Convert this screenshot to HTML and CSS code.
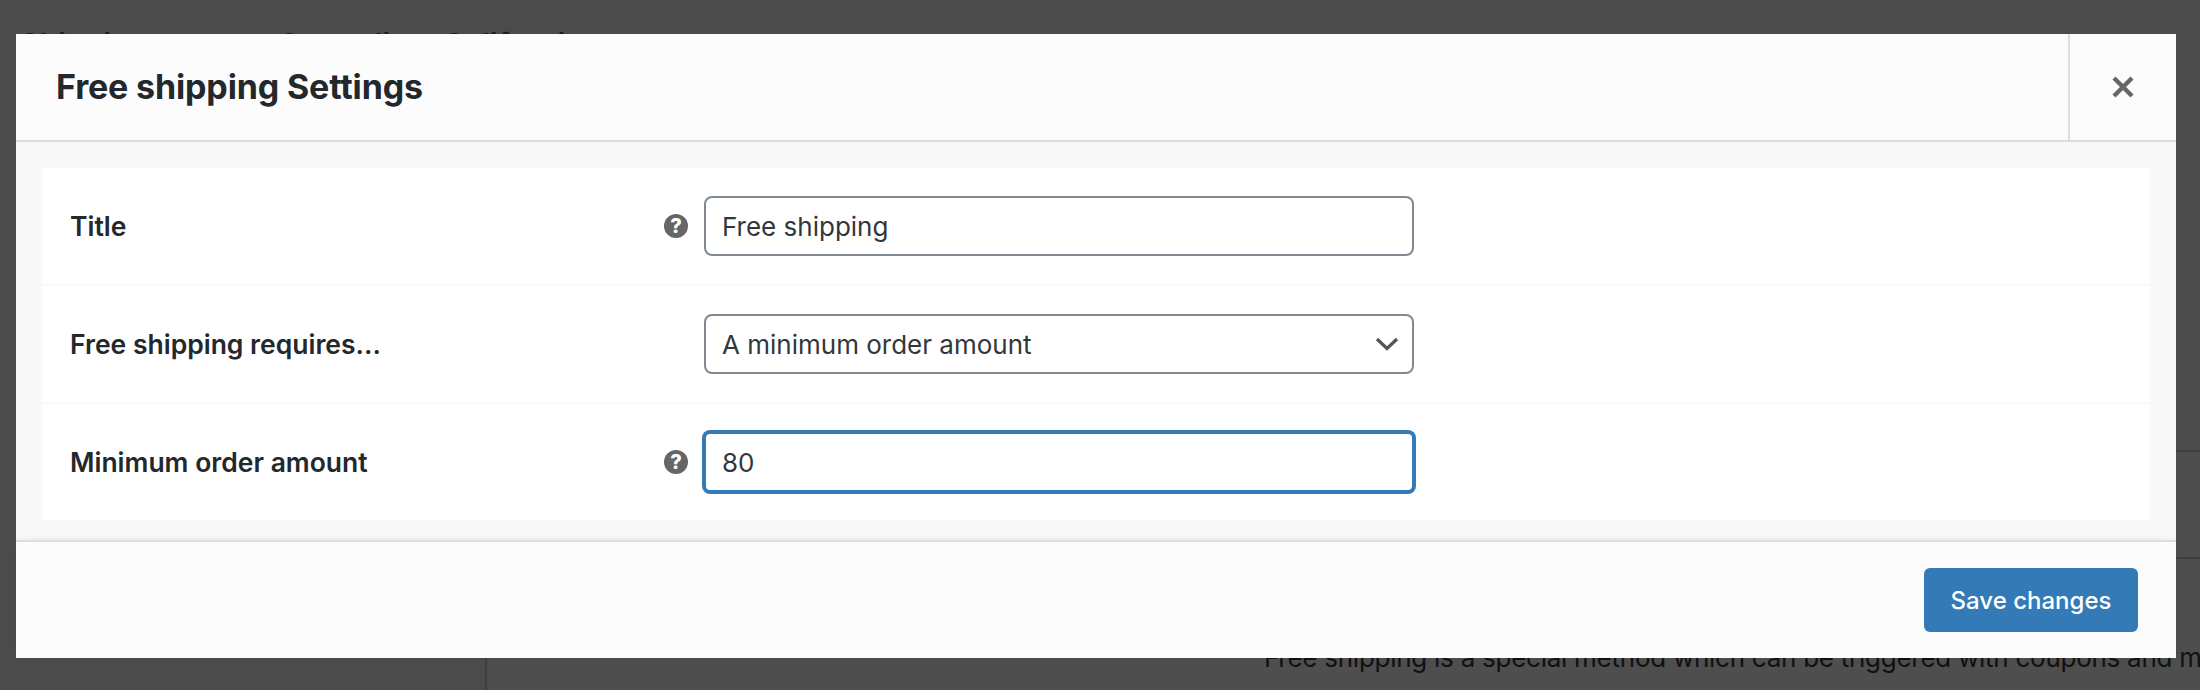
FILE: index.html
```html
<!DOCTYPE html>
<html lang="en">
<head>
<meta charset="utf-8">
<title>Free shipping Settings</title>
<link rel="stylesheet" href="styles.css">
</head>
<body>
<div class="page">
  <h1 class="page-title">Shipping zones &gt; Australia &gt; California</h1>
  <div class="page-row">
    <div class="page-label"></div>
    <div class="page-main page-main-first"></div>
  </div>
  <div class="page-row">
    <div class="page-label page-label-rule"></div>
    <div class="page-main page-main-desc">
      <p class="page-desc">Free shipping is a special method which can be triggered with coupons and minimum spends.</p>
    </div>
  </div>
</div>
<section class="modal">
  <header class="modal-header">
    <h2 class="modal-title">Free shipping Settings</h2>
    <button class="modal-close" type="button" aria-label="Close">
      <svg width="22" height="22" viewBox="0 0 22 22"><path d="M2 2 20 20M20 2 2 20" fill="none" stroke="#666" stroke-width="4.4"/></svg>
    </button>
  </header>
  <div class="modal-body">
    <div class="form">
      <div class="form-row">
        <div class="form-label">Title</div>
        <span class="help">?</span>
        <div class="control">Free shipping</div>
      </div>
      <div class="form-row">
        <div class="form-label">Free shipping requires...</div>
        <div class="control control-select">
          <span>A minimum order amount</span>
          <svg width="24" height="14" viewBox="0 0 24 14"><path d="M2 2 12 11.5 22 2" fill="none" stroke="#555" stroke-width="3.2"/></svg>
        </div>
      </div>
      <div class="form-row form-row-last">
        <div class="form-label">Minimum order amount</div>
        <span class="help">?</span>
        <div class="control control-focus">80</div>
      </div>
    </div>
  </div>
  <footer class="modal-footer">
    <button class="save" type="button">Save changes</button>
  </footer>
</section>
</body>
</html>
```
FILE: styles.css
```css
* { box-sizing: border-box; }
html, body { margin: 0; height: 100%; }
body {
  position: relative;
  height: 690px;
  overflow: hidden;
  background: #4b4b4b;
  font-family: Inter, "Liberation Sans", sans-serif;
  color: #23282d;
}
.page { height: 690px; overflow: hidden; }
.page-title {
  margin: 0;
  height: 450px;
  padding: 24px 0 0 20px;
  font-size: 30px;
  line-height: 40px;
  font-weight: 600;
  color: #14202b;
  white-space: nowrap;
}
.page-row { display: flex; }
.page-label { width: 485px; flex: none; }
.page-label-rule { border-right: 2px solid #3e3e3e; width: 487px; }
.page-main {
  flex: 1;
  min-width: 0;
  overflow: hidden;
  border-top: 2px solid #404040;
  background: #4e4e4e;
}
.page-main-first { height: 107px; }
.page-main-desc { height: 133px; padding: 81px 0 0 777px; }
.page-desc {
  margin: 0;
  font-size: 26px;
  line-height: 36px;
  letter-spacing: -.26px;
  color: #111;
  white-space: nowrap;
}
.modal {
  position: absolute;
  left: 16px;
  top: 34px;
  width: 2160px;
  height: 624px;
  display: flex;
  flex-direction: column;
  background: #fcfcfc;
}
.modal-header {
  display: flex;
  flex: none;
  height: 108px;
  border-bottom: 2px solid #ddd;
}
.modal-title {
  flex: 1;
  margin: 0;
  padding-left: 40px;
  font-size: 34px;
  line-height: 106px;
  font-weight: 700;
  letter-spacing: -.15px;
  color: #23282d;
}
.modal-close {
  display: flex;
  align-items: center;
  justify-content: center;
  width: 108px;
  padding: 0;
  background: none;
  border: 0;
  border-left: 2px solid #ddd;
}
.modal-body {
  flex: 1;
  padding: 26px 26px 20px;
  background: #f8f8f8;
}
.form { background: #fff; }
.form-row {
  display: flex;
  align-items: center;
  height: 118px;
  padding: 28px 0;
  border-bottom: 2px solid #fafafa;
}
.form-row-last { border-bottom: 0; height: 116px; }
.form-label {
  width: 634px;
  flex: none;
  padding-left: 28px;
  font-size: 26.5px;
  font-weight: 600;
  color: #23282d;
}
.form-row .help + .control { margin-left: 16px; }
.form-row .form-label + .control { margin-left: 28px; }
.help {
  width: 24px;
  height: 24px;
  margin-left: -12px;
  flex: none;
  border-radius: 50%;
  background: #666;
  color: #fff;
  font-size: 20px;
  font-weight: 800;
  line-height: 24px;
  text-align: center;
}
.control {
  display: flex;
  align-items: center;
  justify-content: space-between;
  width: 710px;
  height: 60px;
  padding: 0 16px;
  background: #fff;
  border: 2px solid #7e8993;
  border-radius: 8px;
  font-size: 26px;
  color: #32373c;
}
.control-select { padding-right: 13px; }
.control-focus {
  border-color: #337ab7;
  box-shadow: 0 0 0 2px #337ab7;
  border-radius: 6px;
}
.modal-footer {
  display: flex;
  justify-content: flex-end;
  align-items: flex-start;
  flex: none;
  height: 118px;
  padding: 26px 38px 0 0;
  border-top: 2px solid #ddd;
  background: #fcfcfc;
  box-shadow: 0 -2px 8px -6px rgba(0, 0, 0, .3);
}
.save {
  width: 214px;
  height: 64px;
  padding: 0;
  border: 0;
  border-radius: 6px;
  background: #337ab7;
  color: #fff;
  font-family: inherit;
  font-size: 24px;
  font-weight: 500;
}
```
